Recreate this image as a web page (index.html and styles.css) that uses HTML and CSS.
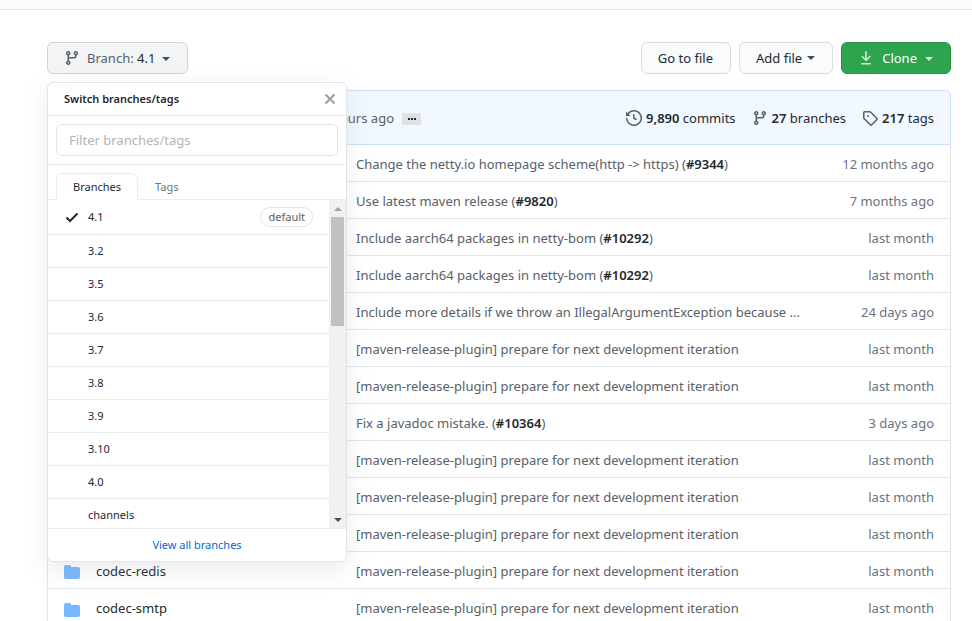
FILE: index.html
```html
<!DOCTYPE html>
<html lang="en">
<head>
<meta charset="utf-8">
<title>netty branches</title>
<link rel="stylesheet" href="styles.css">
</head>
<body>
<svg class="defs" aria-hidden="true">
  <symbol id="branch" viewBox="0 0 16 16"><path fill-rule="evenodd" d="M11.75 2.5a.75.75 0 100 1.5.75.75 0 000-1.5zm-2.25.75a2.25 2.25 0 113 2.122V6A2.5 2.5 0 0110 8.5H6a1 1 0 00-1 1v1.128a2.251 2.251 0 11-1.5 0V5.372a2.25 2.25 0 111.5 0v1.836A2.492 2.492 0 016 7h4a1 1 0 001-1v-.628A2.25 2.25 0 019.5 3.25zM4.25 12a.75.75 0 100 1.5.75.75 0 000-1.5zM3.5 3.25a.75.75 0 111.5 0 .75.75 0 01-1.5 0z"/></symbol>
  <symbol id="folder" viewBox="0 0 16 16"><path d="M1.75 1A1.75 1.75 0 000 2.75v10.5C0 14.216.784 15 1.75 15h12.5A1.75 1.75 0 0016 13.25v-8.5A1.75 1.75 0 0014.25 3h-6.5a.25.25 0 01-.2-.1l-.9-1.2c-.33-.44-.85-.7-1.4-.7h-3.5z"/></symbol>
</svg>
<header class="topbar"></header>
<main class="page">
  <div class="toolbar">
    <div class="picker">
      <button class="btn btn-branch" type="button"><svg class="icon"><use href="#branch"/></svg><span>Branch: <b>4.1</b></span><i class="caret"></i></button>
      <section class="menu">
        <div class="menu-head"><strong>Switch branches/tags</strong>
          <button class="close" type="button" aria-label="Close"><svg viewBox="0 0 12 12"><path d="M1.5 1.5l9 9m0-9l-9 9"/></svg></button>
        </div>
        <div class="filter"><input type="text" aria-label="Filter branches/tags" placeholder="Filter branches/tags"></div>
        <div class="tabs"><button class="tab active" type="button">Branches</button><button class="tab" type="button">Tags</button></div>
        <div class="list-wrap">
          <div class="list">
            <a class="item current" href="#"><svg class="check" viewBox="0 0 16 16"><path d="M2.5 8.5l3.5 3.5 7.5-7.5"/></svg><span>4.1</span><em>default</em></a>
            <a class="item" href="#">3.2</a>
            <a class="item" href="#">3.5</a>
            <a class="item" href="#">3.6</a>
            <a class="item" href="#">3.7</a>
            <a class="item" href="#">3.8</a>
            <a class="item" href="#">3.9</a>
            <a class="item" href="#">3.10</a>
            <a class="item" href="#">4.0</a>
            <a class="item" href="#">channels</a>
          </div>
          <div class="scroll"><i class="up"></i><i class="thumb"></i><i class="down"></i></div>
        </div>
        <a class="view-all" href="#">View all branches</a>
      </section>
    </div>
    <div class="actions">
      <button class="btn" type="button">Go to file</button>
      <button class="btn" type="button">Add file<i class="caret near"></i></button>
      <button class="btn btn-clone" type="button"><svg class="icon" viewBox="0 0 16 16"><path fill-rule="evenodd" d="M7.47 10.78a.75.75 0 001.06 0l3.75-3.75a.75.75 0 00-1.06-1.06L8.75 8.44V1.75a.75.75 0 00-1.5 0v6.69L4.78 5.97a.75.75 0 00-1.06 1.06l3.75 3.75zM3.75 13a.75.75 0 000 1.5h8.5a.75.75 0 000-1.5h-8.5z"/></svg>Clone<i class="caret"></i></button>
    </div>
  </div>
  <div class="files">
    <div class="summary">
      <div class="when"><span>hours ago</span><button class="more" type="button" aria-label="Details"><i></i><i></i><i></i></button></div>
      <div class="stats">
        <a href="#"><svg class="icon" viewBox="0 0 16 16"><path fill-rule="evenodd" d="M1.643 3.143L.427 1.927A.25.25 0 000 2.104V5.75c0 .138.112.25.25.25h3.646a.25.25 0 00.177-.427L2.715 4.215a6.5 6.5 0 11-1.18 4.458.75.75 0 10-1.493.154 8.001 8.001 0 101.6-5.684zM7.75 4a.75.75 0 01.75.75v2.992l2.028.812a.75.75 0 01-.557 1.392l-2.5-1A.75.75 0 017 8.25v-3.5A.75.75 0 017.75 4z"/></svg><span><b>9,890</b> commits</span></a>
        <a href="#"><svg class="icon"><use href="#branch"/></svg><span><b>27</b> branches</span></a>
        <a href="#"><svg class="icon" viewBox="0 0 16 16"><path fill-rule="evenodd" d="M2.5 7.775V2.75a.25.25 0 01.25-.25h5.025a.25.25 0 01.177.073l6.25 6.25a.25.25 0 010 .354l-5.025 5.025a.25.25 0 01-.354 0l-6.25-6.25a.25.25 0 01-.073-.177zm-1.5 0V2.75C1 1.784 1.784 1 2.75 1h5.025c.464 0 .91.184 1.238.513l6.25 6.25a1.75 1.75 0 010 2.474l-5.026 5.026a1.75 1.75 0 01-2.474 0l-6.25-6.25A1.75 1.75 0 011 7.775zM6 5a1 1 0 100 2 1 1 0 000-2z"/></svg><span><b>217</b> tags</span></a>
      </div>
    </div>
    <table>
      <tbody>
        <tr><td class="name"></td><td class="msg">Change the netty.io homepage scheme(http -&gt; https) (<a href="#">#9344</a>)</td><td class="age">12 months ago</td></tr>
        <tr><td class="name"></td><td class="msg">Use latest maven release (<a href="#">#9820</a>)</td><td class="age">7 months ago</td></tr>
        <tr><td class="name"></td><td class="msg">Include aarch64 packages in netty-bom (<a href="#">#10292</a>)</td><td class="age">last month</td></tr>
        <tr><td class="name"></td><td class="msg">Include aarch64 packages in netty-bom (<a href="#">#10292</a>)</td><td class="age">last month</td></tr>
        <tr><td class="name"></td><td class="msg">Include more details if we throw an IllegalArgumentException because ...</td><td class="age">24 days ago</td></tr>
        <tr><td class="name"></td><td class="msg">[maven-release-plugin] prepare for next development iteration</td><td class="age">last month</td></tr>
        <tr><td class="name"></td><td class="msg">[maven-release-plugin] prepare for next development iteration</td><td class="age">last month</td></tr>
        <tr><td class="name"></td><td class="msg">Fix a javadoc mistake. (<a href="#">#10364</a>)</td><td class="age">3 days ago</td></tr>
        <tr><td class="name"></td><td class="msg">[maven-release-plugin] prepare for next development iteration</td><td class="age">last month</td></tr>
        <tr><td class="name"></td><td class="msg">[maven-release-plugin] prepare for next development iteration</td><td class="age">last month</td></tr>
        <tr><td class="name"></td><td class="msg">[maven-release-plugin] prepare for next development iteration</td><td class="age">last month</td></tr>
        <tr><td class="name"><svg class="icon folder"><use href="#folder"/></svg><a href="#">codec-redis</a></td><td class="msg">[maven-release-plugin] prepare for next development iteration</td><td class="age">last month</td></tr>
        <tr><td class="name"><svg class="icon folder"><use href="#folder"/></svg><a href="#">codec-smtp</a></td><td class="msg">[maven-release-plugin] prepare for next development iteration</td><td class="age">last month</td></tr>
      </tbody>
    </table>
  </div>
</main>
</body>
</html>
```
FILE: styles.css
```css
* { box-sizing: border-box; }
html { height: 100%; overflow: hidden; }
body { margin: 0; background: #fff; color: #24292e; font: 13px/20px "Noto Sans", "Open Sans", sans-serif; }
a { color: inherit; text-decoration: none; }
button { font: inherit; color: inherit; cursor: pointer; }
.defs { display: none; }
.icon { width: 16px; height: 16px; flex: none; fill: #586069; }
.topbar { height: 10px; background: #fafbfc; border-bottom: 1px solid #e1e4e8; }
.page { padding: 32px 21px 0 47px; }

.toolbar { display: flex; justify-content: space-between; margin-bottom: 16px; }
.picker { position: relative; }
.actions { display: flex; gap: 8px; }
.btn { display: flex; align-items: center; height: 32px; padding: 0 17px 0 16px; border: 1px solid #d9dbdd; border-radius: 6px; background: #fafbfc; }
.btn-branch { background: #f3f4f6; border-color: #d1d4d7; color: #586069; gap: 7px; }
.btn-branch b { font-weight: 400; color: #24292e; }
.caret { border: 4px solid transparent; border-top-color: currentColor; border-bottom: 0; margin-top: 2px; color: #444d56; }
.near { margin: 0 0 0 5px; }
.btn-clone { background: #2ea44f; border-color: #2a9147; color: #fff; gap: 8px; }
.btn-clone .icon { fill: #d5edda; }
.btn-clone .caret { color: #d5edda; }

.menu { position: absolute; top: 40px; left: 0; z-index: 2; width: 300px; background: #fff; border: 1px solid #e1e4e8; border-radius: 6px; box-shadow: 0 8px 24px rgba(149, 157, 165, 0.2); font-size: 11px; line-height: 18px; overflow: hidden; }
.menu-head { display: flex; align-items: center; justify-content: space-between; height: 33px; padding: 0 10px 0 16px; border-bottom: 1px solid #eaecef; }
.menu-head strong { font-weight: 600; }
.close { display: flex; padding: 0; border: 0; background: none; }
.close svg { width: 12px; height: 12px; fill: none; stroke: #959da5; stroke-width: 2; }
.filter { padding: 8px; border-bottom: 1px solid #eaecef; }
.filter input { display: block; width: 100%; height: 32px; padding: 0 12px; border: 1px solid #e1e4e8; border-radius: 6px; font: 13px/20px "Noto Sans", sans-serif; }
.filter input::placeholder { color: #b1b6bb; }
.tabs { display: flex; padding: 8px 8px 0; box-shadow: inset 0 -1px #eaecef; }
.tab { height: 27px; padding: 0 16px; border: 1px solid transparent; border-bottom: 0; background: none; color: #6a737d; }
.tab.active { background: #fff; border-color: #eaecef; border-radius: 6px 6px 0 0; color: #24292e; }
.list-wrap { display: flex; height: 328px; }
.list { flex: 1; overflow: hidden; }
.item { display: flex; align-items: center; height: 33px; padding: 0 16px 0 40px; border-bottom: 1px solid #eaecef; }
.item.current { height: 35px; padding-left: 16px; }
.check { width: 16px; height: 16px; margin-right: 8px; fill: none; stroke: #24292e; stroke-width: 2; }
.item em { margin-left: auto; padding: 0 7px; border: 1px solid #e1e4e8; border-radius: 10px; font-style: normal; color: #586069; }
.scroll { display: flex; flex-direction: column; align-items: center; width: 17px; background: #f1f1f1; }
.up { margin: 7px 0 6px; border: 4px solid transparent; border-bottom-color: #a3a3a3; border-top: 0; }
.thumb { width: 13px; height: 109px; background: #c1c1c1; }
.down { margin: auto 0 6px; border: 4px solid transparent; border-top-color: #505050; border-bottom: 0; }
.view-all { display: block; padding: 7px 0; border-top: 1px solid #eaecef; text-align: center; color: #0366d6; }

.files { border: 1px solid #e1e4e8; border-radius: 6px; }
.summary { display: flex; align-items: center; justify-content: space-between; height: 55px; margin: -1px -1px 0; padding-right: 16px; background: #f1f8ff; border: 1px solid #c8e1ff; border-radius: 6px 6px 0 0; }
.when { display: flex; align-items: center; justify-content: flex-end; gap: 8px; flex: 0 0 373px; color: #586069; }
.more { display: flex; align-items: center; justify-content: center; gap: 1px; width: 19px; height: 12px; margin-top: 3px; padding: 0; border: 0; border-radius: 1px; background: #dfe2e5; }
.more i { width: 2px; height: 2px; background: #24292e; }
.stats { display: flex; gap: 16px; }
.stats a { display: flex; align-items: center; gap: 4px; }
.stats b { font-weight: 600; }
table { width: 100%; border-spacing: 0; table-layout: fixed; }
td { height: 37px; padding: 1px 16px 0 0; border-bottom: 1px solid #e1e4e8; white-space: nowrap; }
tr:last-child td { border-bottom: 0; }
.name { width: 308px; padding-left: 16px; }
.folder { margin-right: 16px; fill: #79b8ff; vertical-align: middle; }
.msg { color: #586069; overflow: hidden; }
.msg a { font-weight: 600; color: #24292e; }
.age { width: 130px; color: #6a737d; text-align: right; }
```
